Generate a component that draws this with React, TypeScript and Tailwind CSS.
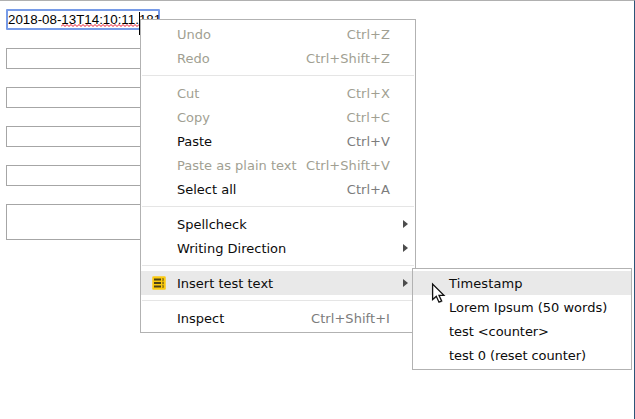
type Entry = { label: string; keys?: string; disabled?: boolean; sub?: boolean; active?: boolean; icon?: boolean } | null;

const entries: Entry[] = [
  { label: "Undo", keys: "Ctrl+Z", disabled: true },
  { label: "Redo", keys: "Ctrl+Shift+Z", disabled: true },
  null,
  { label: "Cut", keys: "Ctrl+X", disabled: true },
  { label: "Copy", keys: "Ctrl+C", disabled: true },
  { label: "Paste", keys: "Ctrl+V" },
  { label: "Paste as plain text", keys: "Ctrl+Shift+V", disabled: true },
  { label: "Select all", keys: "Ctrl+A" },
  null,
  { label: "Spellcheck", sub: true },
  { label: "Writing Direction", sub: true },
  null,
  { label: "Insert test text", sub: true, active: true, icon: true },
  null,
  { label: "Inspect", keys: "Ctrl+Shift+I" },
];

const subEntries = [
  { label: "Timestamp", tracking: "tracking-[0.12px]" },
  { label: "Lorem Ipsum (50 words)", tracking: "tracking-normal" },
  { label: "test <counter>", tracking: "tracking-[-0.07px]" },
  { label: "test 0 (reset counter)", tracking: "tracking-[-0.08px]" },
];

function ExtensionIcon() {
  return (
    <svg width="14" height="14" viewBox="0 0 14 14">
      <rect x="0.25" y="0.25" width="13.5" height="13.5" rx="1.5" fill="#fccb10" stroke="#f3cf52" strokeWidth="0.5" />
      <path d="M2 3.5h7M2 7h7M2 10.5h7" stroke="#4d4215" strokeWidth="1.8" />
      <path d="M11 2.3v2.5M11 5.8v2.4M11 9.2v2.5" stroke="#6d5a14" strokeWidth="1.4" />
      <path d="M10 3.5h1M10 7h1M10 10.5h1" stroke="#b5921a" strokeWidth="1" />
    </svg>
  );
}

function Cursor() {
  return (
    <svg className="absolute left-[18px] top-[13px]" width="17" height="24" viewBox="0 0 17 24">
      <path d="M2.6 3V18.2l3.7-3.3 2.8 6 2.7-1.2-2.6-5.6h5.2z" fill="#777" opacity="0.35" />
      <path
        d="M1.6 2V17.6l3.7-3.3 2.7 5.9 2.6-1.2-2.6-5.6h4.9z"
        fill="#fff"
        stroke="#111"
        strokeWidth="1.3"
      />
    </svg>
  );
}

function ContextMenu() {
  return (
    <div className="absolute left-[140px] top-[19px] w-[276px] border border-[#b2b2b2] bg-white py-0.5">
      {entries.map((e, i) =>
        e === null ? (
          <div key={i} className="flex h-[11px] items-center px-px">
            <div className="h-px w-full bg-[#e5e5e5]" />
          </div>
        ) : (
          <div
            key={i}
            className={`flex h-6 items-center whitespace-nowrap ${e.active ? "bg-[#e9e9e9]" : ""} ${e.disabled ? "text-[#a19f92]" : "text-[#0c0c0c]"}`}
          >
            <span className="flex w-9 shrink-0 pl-[11px]">{e.icon && <ExtensionIcon />}</span>
            <span className="pt-0.5">{e.label}</span>
            {e.keys && (
              <span className={`ml-auto pr-[25px] pt-0.5 tracking-[0.05px] ${e.disabled ? "" : "text-[#7c7c7c]"}`}>
                {e.keys}
              </span>
            )}
            {e.sub && (
              <svg className="ml-auto mr-[7px]" width="5" height="8" viewBox="0 0 5 8">
                <path d="M0 0l5 4-5 4z" fill="#4c4c4c" />
              </svg>
            )}
          </div>
        ),
      )}
    </div>
  );
}

function Submenu() {
  return (
    <div className="absolute left-[412px] top-[268px] w-[220px] border border-[#b2b2b2] bg-white py-0.5 text-[#0c0c0c]">
      {subEntries.map(({ label, tracking }, i) => (
        <div
          key={label}
          className={`flex h-6 items-center whitespace-nowrap pl-9 pt-0.5 ${tracking} ${i === 0 ? "bg-[#e9e9e9]" : ""}`}
        >
          {label}
        </div>
      ))}
      <Cursor />
    </div>
  );
}

export default function App() {
  return (
    <div className="relative h-[419px] w-[635px] overflow-hidden border-r border-t border-r-[#2c5478] border-t-[#b0b0b0] bg-white font-['DejaVu_Sans',sans-serif] text-[13px] leading-6">
      <div className="flex flex-col gap-[18px] pl-1.5 pt-2">
        <div className="relative h-[21px] w-[154px] rounded-[1px] border-2 border-[#779be8] bg-white font-['Liberation_Sans',sans-serif] text-[13.333px] leading-[17px] text-black">
          <div className="whitespace-nowrap">2018-08-13T14:10:11.181</div>
          <svg className="absolute left-[53px] top-[13px]" width="78" height="3" viewBox="0 0 78 3">
            <path
              d="M0 2.5l2-2 2 2 2-2 2 2 2-2 2 2 2-2 2 2 2-2 2 2 2-2 2 2 2-2 2 2 2-2 2 2 2-2 2 2 2-2 2 2 2-2 2 2 2-2 2 2 2-2 2 2 2-2 2 2 2-2 2 2 2-2 2 2 2-2 2 2 2-2 2 2 2-2 2 2 2-2"
              fill="none"
              stroke="#e8122a"
              strokeWidth="1"
            />
          </svg>
          <div className="absolute left-[131px] top-[1px] h-[23px] w-px bg-black" />
        </div>
        {[0, 1, 2, 3].map((n) => (
          <div key={n} className="h-[21px] w-[155px] border border-[#a6a6a6]" />
        ))}
        <div className="h-9 w-[155px] border border-[#a6a6a6]" />
      </div>
      <div className="absolute -top-px left-0">
        <ContextMenu />
        <Submenu />
      </div>
    </div>
  );
}
